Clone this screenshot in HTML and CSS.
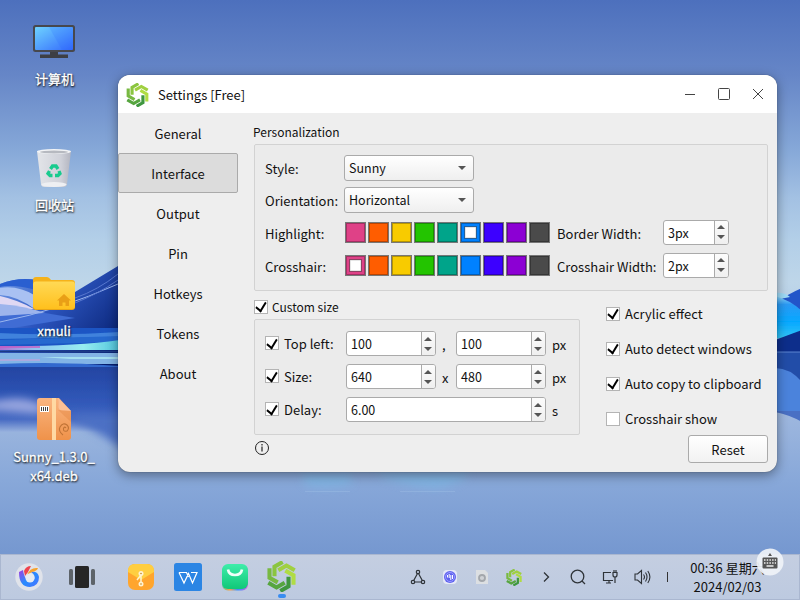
FILE: index.html
```html
<!DOCTYPE html>
<html lang="zh-CN">
<head>
<meta charset="utf-8">
<title>Settings</title>
<link rel="stylesheet" href="styles.css">
</head>
<body>
<svg width="0" height="0" class="defs">
  <symbol id="logo6" viewBox="-14.500 -15.500 29 31">
    <g fill="none" stroke-width="4.100">
      <path d="M-12-8.300V1.200L-3.800 5.900" stroke="#78b942"/>
      <path d="M-12-8.300V1.200L-3.800 5.900" stroke="#8bc540" transform="rotate(60)"/>
      <path d="M-12-8.300V1.200L-3.800 5.900" stroke="#a0d040" transform="rotate(120)"/>
      <path d="M-12-8.300V1.200L-3.800 5.900" stroke="#b0dc43" transform="rotate(180)"/>
      <path d="M-12-8.300V1.200L-3.800 5.900" stroke="#3f973f" transform="rotate(240)"/>
      <path d="M-12-8.300V1.200L-3.800 5.900" stroke="#56a53f" transform="rotate(300)"/>
    </g>
  </symbol>
</svg>
<div class="desktop">
  <svg class="wallpaper" viewBox="0 0 800 600" width="800" height="600" preserveAspectRatio="none">
    <defs>
      <linearGradient id="sky" x1="0" y1="0" x2="0" y2="1"><stop offset="0" stop-color="#4d70bd"/><stop offset=".125" stop-color="#6686c7"/><stop offset=".25" stop-color="#86a8d8"/><stop offset=".33" stop-color="#a3c1e3"/><stop offset=".4" stop-color="#b3cfe8"/><stop offset=".47" stop-color="#bed6e9"/><stop offset=".7" stop-color="#9cb6de"/><stop offset=".8" stop-color="#88a8d9"/><stop offset=".92" stop-color="#7698d0"/><stop offset="1" stop-color="#7698d0"/></linearGradient>
      <linearGradient id="hill" x1="0" y1="0" x2="1" y2=".8"><stop offset="0" stop-color="#7ba4ec"/><stop offset=".45" stop-color="#2c55bf"/><stop offset="1" stop-color="#061f70"/></linearGradient>
      <linearGradient id="water" x1="0" y1="0" x2="0" y2="1"><stop offset="0" stop-color="#2344a2"/><stop offset=".55" stop-color="#3159b9"/><stop offset=".8" stop-color="#4468c2"/><stop offset="1" stop-color="#98b2de"/></linearGradient>
      <linearGradient id="streak" x1="0" y1="0" x2="1" y2="0"><stop offset="0" stop-color="#b06bd0"/><stop offset=".3" stop-color="#8fc4f0"/><stop offset=".7" stop-color="#96eef0"/><stop offset="1" stop-color="#4fc4dc"/></linearGradient>
      <linearGradient id="wave" x1="0" y1="0" x2="0" y2="1"><stop offset="0" stop-color="#8fd8fb"/><stop offset=".2" stop-color="#2b9af5"/><stop offset=".6" stop-color="#05a8ff"/><stop offset="1" stop-color="#35c6f6"/></linearGradient>
      <filter id="soft" x="-20%" y="-50%" width="140%" height="200%"><feGaussianBlur stdDeviation="4"/></filter>
      <filter id="haze" x="-20%" y="-50%" width="140%" height="200%"><feGaussianBlur stdDeviation=".6"/></filter>
    </defs>
    <rect width="800" height="600" fill="url(#sky)"/>
    <path d="M0 284Q18 277 38 280L75 292 118 266V370H0Z" fill="url(#hill)"/>
    <g filter="url(#haze)">
      <path d="M0 284Q18 277 36 280V290Q14 284 0 287Z" fill="#2c5fd0"/>
      <path d="M0 288Q18 285 36 296V310Q18 296 0 295Z" fill="#a9c1f2"/>
      <path d="M0 296Q18 300 34 309L0 309Z" fill="#e0d8f3"/>
      <path d="M0 304Q25 306 45 313L0 322Z" fill="#9db4ec"/>
      <path d="M0 316 45 313 75 318 0 330Z" fill="#3f6cd4"/>
      <path d="M0 322Q60 310 118 284" fill="none" stroke="#9bb6ef"/>
      <path d="M75 298Q98 290 118 274M75 303Q98 294 118 280" fill="none" stroke="#5877cf"/>
      <path d="M-2 328H120V350H-2Z" fill="#1a55c4"/>
      <path d="M-2 333Q60 336 120 332V337L-2 339Z" fill="#3f82dc"/>
      <path d="M-2 340 120 336V342L-2 345Z" fill="#2669cf"/>
      <path d="M-2 346Q70 347 120 340V350H-2Z" fill="url(#streak)"/>
      <path d="M-2 353H120V364H-2Z" fill="#82b4e6"/>
      <path d="M40 357H120V359H70Z" fill="#a6e0f0"/>
      <path d="M-2 351.500H120" stroke="#1b3a86" stroke-width="1.500"/>
      <path d="M-2 347H40" stroke="#c65cc4" stroke-width="1.500"/>
      <path d="M-2 360H40" stroke="#b9a6dd" stroke-width="1.500"/>
      <path d="M-2 364Q60 361 120 366V370H-2Z" fill="#3269ce"/>
    </g>
    <path d="M-2 367H120V432H-2Z" fill="url(#water)" filter="url(#haze)"/>
    <path d="M-10 402Q20 395 36 402T36 414L-10 410Z" fill="#98a6df" filter="url(#soft)"/>
    <path d="M72 420Q100 432 130 454V415H72Z" fill="#4b70c4" filter="url(#soft)"/>
    <g filter="url(#haze)">
      <path d="M777 302Q788 294 802 288V318H777Z" fill="#2455c9"/>
      <path d="M775 293Q784 292 790 297L775 300Z" fill="#9fdcf8"/>
      <path d="M775 296Q790 300 802 311V330Q790 337 775 339Z" fill="url(#wave)"/>
      <path d="M775 340 802 330V352H775Z" fill="#082d8b"/>
      <path d="M775 352H802V384H775Z" fill="#244da8"/>
      <path d="M775 368Q790 368 802 382V411H775Z" fill="#4c83dc"/>
      <path d="M775 411H802V422Q790 415 775 412Z" fill="#4a6fc4"/>
      <path d="M777 352H802" stroke="#5f86cf"/>
    </g>
    <path d="M302 474H350L352 484Q330 490 305 485ZM375 473H470Q460 485 435 488 395 485 375 473Z" fill="#7dbbe8" opacity=".6" filter="url(#soft)"/>
    <path d="M305 491.500H350M400 491.500H455" stroke="#a5c4e8" opacity=".35"/>
  </svg>

  <div class="shortcut computer">
    <svg width="44" height="44" viewBox="0 0 44 44">
      <defs><linearGradient id="scr" x1="0" y1="0" x2="1" y2="1"><stop offset="0" stop-color="#6ed2ff"/><stop offset="1" stop-color="#3369fc"/></linearGradient></defs>
      <path d="M18 29H26V32.500H36V36H8V32.500H18Z" fill="#3d3f45"/>
      <rect x="1" y="3" width="42" height="27" rx="2.500" fill="#47484d"/><rect x="3" y="5" width="38" height="23" rx="1" fill="url(#scr)"/><path d="M17 5H40Q41 5 41 6V28H30Z" fill="#245cff" opacity=".15"/>
    </svg>
    <span>计算机</span>
  </div>
  <div class="shortcut trash">
    <svg width="44" height="44" viewBox="0 0 44 44">
      <defs><linearGradient id="bin" x1="0" y1="0" x2="1" y2="0"><stop offset="0" stop-color="#e3e5e9"/><stop offset=".7" stop-color="#cfd1d9"/><stop offset="1" stop-color="#b3b5c0"/></linearGradient></defs>
      <path d="M5 3 9 36Q9 39 13 39H31Q35 39 35 36L39 3Z" fill="url(#bin)"/><ellipse cx="22" cy="3.500" rx="17" ry="2.500" fill="#f3f4f6"/><ellipse cx="22" cy="4" rx="14" ry="1.500" fill="#b6b9c0"/><ellipse cx="22" cy="36.500" rx="12.500" ry="2.500" fill="#eeeff2"/>
      <g fill="none" stroke="#18cb8e" stroke-width="3.300"><path d="M18.500 21 20.500 18H24L26 21"/><path d="M27 23 28 25.500 26 27.500H23"/><path d="M20.500 27.500H18L16 25.500 17.500 23"/></g>
    </svg>
    <span>回收站</span>
  </div>
  <div class="shortcut home">
    <svg width="44" height="44" viewBox="0 0 44 44">
      <defs><linearGradient id="fold" x1="0" y1="0" x2="0" y2="1"><stop offset="0" stop-color="#ffd955"/><stop offset="1" stop-color="#ffc01d"/></linearGradient></defs>
      <path d="M1 6Q1 3 4 3H15Q17 3 19 6H40Q43 6 43 9V16H1Z" fill="#f5b21a"/><rect x="1" y="8" width="42" height="28" rx="3" fill="#e8a617"/><rect x="1" y="7.500" width="42" height="27.500" rx="3" fill="url(#fold)"/>
      <path d="M32 20 39 26.500H37V32H33.500V28.500H30.500V32H27V26.500H25Z" fill="#e99f16"/>
    </svg>
    <span>xmuli</span>
  </div>
  <div class="shortcut package">
    <svg width="44" height="44" viewBox="0 0 44 44">
      <defs><linearGradient id="deb" x1="0" y1="0" x2="0" y2="1"><stop offset="0" stop-color="#fab580"/><stop offset="1" stop-color="#ef924a"/></linearGradient></defs>
      <path d="M8 0H27L39 13V39Q39 42 36 42H8Q5 42 5 39V3Q5 0 8 0Z" fill="url(#deb)"/><path d="M20 0H24V42H20Z" fill="#ffd9a3"/><path d="M26 0Q27 3 26.500 8 26 12 30 12.500L39 13Z" fill="#fcc095"/><path d="M26 12 39 13V24Z" fill="#d97a35" opacity=".3"/>
      <path d="M8 8H17V14H8Z" fill="#fff"/><path d="M9.500 9V13M11.500 9V13M13.500 9V13M15.500 9V13" stroke="#444"/>
      <path d="M31 37Q26 33 28 29 31 24 35 27 38 30 35 33 31 34 31.500 30.500 32.500 28 34 30" fill="none" stroke="#c07335" stroke-width="1.100"/>
    </svg>
    <span>Sunny_1.3.0_<br>x64.deb</span>
  </div>

  <main class="window">
    <header class="titlebar">
      <svg class="logo" width="23" height="24"><use href="#logo6"/></svg>
      <h1>Settings [Free]</h1>
      <svg class="controls" width="82" height="16" viewBox="0 0 82 16" fill="none" stroke="#444"><path d="M1 8.500H11"/><rect x="34.500" y="2.500" width="11" height="11" rx="1"/><path d="M69 3 79 13M79 3 69 13"/></svg>
    </header>
    <div class="body">
      <nav class="sidebar">
        <a>General</a><a class="active">Interface</a><a>Output</a><a>Pin</a><a>Hotkeys</a><a>Tokens</a><a>About</a>
      </nav>
      <section class="content">
        <h2>Personalization</h2>
        <div class="group personal">
          <div class="row select-row"><label>Style:</label><div class="combo">Sunny<i></i></div></div>
          <div class="row select-row"><label>Orientation:</label><div class="combo">Horizontal<i></i></div></div>
          <div class="row color-row"><label>Highlight:</label>
            <div class="swatches"><b class="pink"></b><b class="orange"></b><b class="yellow"></b><b class="green"></b><b class="teal"></b><b class="blue picked"></b><b class="indigo"></b><b class="purple"></b><b class="gray"></b></div>
            <label>Border Width:</label><div class="spin short"><span>3px</span><i></i></div></div>
          <div class="row color-row"><label>Crosshair:</label>
            <div class="swatches"><b class="pink picked"></b><b class="orange"></b><b class="yellow"></b><b class="green"></b><b class="teal"></b><b class="blue"></b><b class="indigo"></b><b class="purple"></b><b class="gray"></b></div>
            <label>Crosshair Width:</label><div class="spin short"><span>2px</span><i></i></div></div>
        </div>
        <div class="lower">
          <div class="left">
            <div class="check custom"><i class="on"></i><span>Custom size</span></div>
            <div class="group size">
              <div class="size-row"><div class="check"><i class="on"></i><span>Top left:</span></div><div class="spin"><span>100</span><i></i></div><em>,</em><div class="spin"><span>100</span><i></i></div><em>px</em></div>
              <div class="size-row"><div class="check"><i class="on"></i><span>Size:</span></div><div class="spin"><span>640</span><i></i></div><em>x</em><div class="spin"><span>480</span><i></i></div><em>px</em></div>
              <div class="size-row"><div class="check"><i class="on"></i><span>Delay:</span></div><div class="spin wide"><span>6.00</span><i></i></div><em>s</em></div>
            </div>
            <svg class="info" width="16" height="16" viewBox="0 0 16 16" fill="none" stroke="#222"><circle cx="8" cy="8" r="6.500"/><path d="M8 6.500V11.500M8 4V5.500" stroke-width="1.200"/></svg>
          </div>
          <div class="right">
            <div class="check"><i class="on"></i><span>Acrylic effect</span></div>
            <div class="check"><i class="on"></i><span>Auto detect windows</span></div>
            <div class="check"><i class="on"></i><span>Auto copy to clipboard</span></div>
            <div class="check"><i></i><span>Crosshair show</span></div>
            <button>Reset</button>
          </div>
        </div>
      </section>
    </div>
  </main>

  <footer class="taskbar">
    <div class="apps">
      <svg width="28" height="28" viewBox="0 0 28 28"><defs><linearGradient id="ring" x1="0" y1="0" x2="1" y2="1"><stop offset="0" stop-color="#a13ce2"/><stop offset=".5" stop-color="#288cff"/><stop offset="1" stop-color="#4a72ff"/></linearGradient></defs><circle cx="14" cy="14" r="13.700" fill="#e0e3ea"/><path d="M4 9Q4 24 15 24 24 23 24 14 23 8 16 9 21 12 19 17 16 20 12 17 9 14 8 7Z" fill="url(#ring)"/><path d="M9 8Q11 3 16 3L13 9 10 13Z" fill="#ef424d"/><path d="M12 12Q15 4 23 5 22 8 17 9Z" fill="#f7a22d"/><circle cx="15" cy="15" r="4.500" fill="#e6eaf2"/></svg>
      <svg width="28" height="28" viewBox="0 0 28 28"><rect x="1" y="6" width="4" height="16" rx="1.500" fill="#5d6369"/><rect x="7" y="3" width="14" height="22" rx="1.500" fill="#262626"/><rect x="23" y="6" width="4" height="16" rx="1.500" fill="#5d6369"/></svg>
      <svg width="28" height="28" viewBox="0 0 28 28"><rect x="1" y="1" width="26" height="26" rx="7" fill="#ffa52d"/><path d="M1 8Q1 1 8 1H20Q27 1 27 8V9L14 17 1 9Z" fill="#ffce40"/><path d="M14 10V20M14 12 10 17" stroke="#fff4cc" stroke-width="1.500"/><circle cx="14" cy="10.500" r="2.500" fill="#fff2d1"/><circle cx="14" cy="21" r="2.500" fill="#fff2d1"/><circle cx="14" cy="10.500" r=".8" fill="#bd8523"/><circle cx="14" cy="21" r=".8" fill="#bd8523"/></svg>
      <svg width="28" height="28" viewBox="0 0 28 28"><rect width="28" height="28" rx="2.500" fill="#2b85e4"/><path d="M5 9.500H12.500L14.500 14M5 9.500 10 20 14.500 10.500 18.500 20 23 9.500H17" fill="none" stroke="#fff" stroke-width="1.200"/></svg>
      <svg width="28" height="28" viewBox="0 0 28 28"><defs><linearGradient id="store" x1="0" y1="0" x2="0" y2="1"><stop offset="0" stop-color="#3eedaa"/><stop offset="1" stop-color="#10c878"/></linearGradient><linearGradient id="rain"><stop offset="0" stop-color="#52c6a0"/><stop offset=".3" stop-color="#ffa042"/><stop offset=".6" stop-color="#3693ff"/><stop offset="1" stop-color="#d45be5"/></linearGradient></defs><rect x="1" y="2" width="26" height="25.500" rx="6" fill="url(#rain)"/><rect x="1" y="1" width="26" height="25" rx="6" fill="url(#store)"/><path d="M7 6.500Q8 12 14 12T21 6.500" fill="none" stroke="#f1fff9" stroke-width="2.700"/></svg>
      <div class="running"><svg width="29" height="31"><use href="#logo6"/></svg><i></i></div>
    </div>
    <div class="tray">
      <svg width="16" height="16" viewBox="0 0 16 16" fill="none" stroke="#2e3338" stroke-width="1.200"><circle cx="8" cy="3" r="1.700"/><circle cx="3" cy="13" r="1.700"/><circle cx="13" cy="13" r="1.700"/><path d="M7.500 4.500 3.700 11.500M8.500 4.500 12.300 11.500M4.500 13H11.500"/></svg>
      <svg width="16" height="16" viewBox="0 0 16 16"><rect x="1" y="1" width="14" height="14" rx="4" fill="#e5e8f7"/><circle cx="8" cy="8" r="6" fill="#5e62ef"/><circle cx="8" cy="8" r="4.500" fill="none" stroke="#a8a6ff" stroke-width=".8"/><path d="M5.500 6V8.500M7.200 5V9M8.800 6V11M10.500 6V10" stroke="#fff"/></svg>
      <svg width="16" height="16" viewBox="0 0 16 16"><path d="M2 1H11L14 4V15H2Z" fill="#dcdfe2"/><circle cx="8" cy="9" r="3" fill="#cfd2d6" stroke="#a3a7ac" stroke-width="1.800"/></svg>
      <svg width="16" height="17"><use href="#logo6"/></svg>
      <svg width="16" height="16" viewBox="0 0 16 16" fill="none" stroke="#2e3338" stroke-width="1.300"><path d="M6 3.500 10.500 8 6 12.500"/></svg>
      <svg width="16" height="16" viewBox="0 0 16 16" fill="none" stroke="#2e3338" stroke-width="1.300"><circle cx="7.500" cy="7.500" r="6.300"/><path d="M12 12 15 15"/></svg>
      <svg width="16" height="16" viewBox="0 0 16 16" fill="none" stroke="#2e3338" stroke-width="1.200"><path d="M9 3.500H1.500V11.500H11M7 11.500V14M4 14H9M11 3.500H15V6Q15 8 13 8T11 6ZM12 3.500V1M14 3.500V1M13 8V14"/></svg>
      <svg width="18" height="16" viewBox="0 0 18 16" fill="none" stroke="#2e3338" stroke-width="1.100"><path d="M1 5H3.500L7.500 1.500V14.500L3.500 11H1ZM9.500 5.500Q11.500 8 9.500 10.500M11.500 3.500Q14.500 8 11.500 12.500M13.800 2Q18 8 13.800 14"/></svg>
      <s></s>
      <div class="clock"><span>00:36 星期六</span><span>2024/02/03</span></div>
    </div>
  </footer>
  <svg class="keyboard" width="28" height="28" viewBox="0 0 28 28"><circle cx="14" cy="14" r="13.500" fill="#eff2f7" opacity=".93"/><path d="M14 5 16 8H12Z" fill="#555"/><rect x="6.500" y="9.500" width="15" height="11" rx="1" fill="#555"/><path d="M8 12H20M8 15H20" stroke="#eee" stroke-width="1.700" stroke-dasharray="1.500 1.200"/><path d="M10.500 18H17.500" stroke="#eee" stroke-width="1.500"/></svg>
</div>
</body>
</html>
```
FILE: styles.css
```css
* { box-sizing: border-box; }
body { margin: 0; font: 13px/20px "Noto Sans CJK SC", sans-serif; color: #111; }
.defs { position: absolute; }
.desktop { position: relative; width: 800px; height: 600px; overflow: hidden; }
.wallpaper { position: absolute; inset: 0; }
i, em { font-style: normal; }

.shortcut { position: absolute; left: 4px; width: 100px; display: flex; flex-direction: column; align-items: center; gap: 3px; color: #fff; font-size: 13px; line-height: 19px; text-align: center; text-shadow: 0 1px 2px #000c, 1px 1px 2px #000a; -webkit-text-stroke: .3px #fff; }
.computer { top: 22px; }
.trash { top: 148px; }
.computer span, .trash span { padding-left: 1px; }
.home { top: 274px; }
.package { top: 398px; gap: 5px; }

.window { position: absolute; left: 118px; top: 75px; width: 659px; height: 397px; border-radius: 12px; background: #eee; box-shadow: 0 0 1px #0008, 0 3px 12px #0006; overflow: hidden; }
.titlebar { height: 38px; display: flex; align-items: center; background: #fff; padding: 2px 11px 0 8px; }
.titlebar h1 { font-size: 13px; font-weight: 400; margin: 0 0 0 9px; }
.controls { margin: -3px 0 0 auto; }
.body { display: flex; }
.sidebar { width: 120px; display: flex; flex-direction: column; }
.sidebar a { height: 40px; display: flex; align-items: center; justify-content: center; border: 1px solid transparent; border-radius: 2px; padding-top: 2px; }
.sidebar .active { background: #dcdcdc; border-color: #aaa; }

.content { padding: 9px 9px 0 16px; flex: 1; }
.content h2 { font-size: 12px; font-weight: 400; line-height: 20px; margin: 0 0 2px -1px; }
.group { background: #ebebeb; border: 1px solid #d2d2d2; border-radius: 2px; }
.personal { height: 147px; padding: 10px 10px 0; }
.row { display: grid; align-items: center; }
.select-row { grid-template-columns: 79px 130px; height: 26px; margin-bottom: 6px; }
.row label { padding-top: 2px; white-space: nowrap; }
.combo { height: 26px; border: 1px solid #aaa; border-radius: 3px; background: linear-gradient(#fff, #efefef); padding: 0 7px 0 4px; display: flex; align-items: center; justify-content: space-between; font-size: 12.5px; }
.combo i { border: 4px solid transparent; border-top: 4px solid #555; border-bottom: 0; }
.color-row { grid-template-columns: 80px 212px 106px 66px; height: 26px; margin-bottom: 7px; }
.color-row label { padding-top: 4px; }
.swatches { display: flex; gap: 2px; }
.swatches b { width: 21px; height: 21px; border: 1px solid #777; box-shadow: inset 0 0 0 1px #0004; display: grid; place-items: center; }
.picked::after { content: ""; width: 11px; height: 11px; border: 1px solid #4448; background: #fff; background-clip: padding-box; box-shadow: inset 0 0 0 .5px #0003; }
.pink { background: #df4187; } .orange { background: #ff5d00; } .yellow { background: #f8cb00; }
.green { background: #23c400; } .teal { background: #00a48a; } .blue { background: #0081ff; }
.indigo { background: #3c00ff; } .purple { background: #8c00d4; } .gray { background: #4a4a4a; }

.spin { height: 25px; display: grid; grid-template-columns: 1fr 14px; border: 1px solid #aaa; border-radius: 3px; background: #fff; line-height: 24px; font-size: 12.5px; overflow: hidden; }
.spin span { padding-left: 4px; height: 23px; }
.spin i { height: 23px; border-left: 1px solid #aaa; background: linear-gradient(#fcfcfc, #efefef); display: flex; flex-direction: column; align-items: center; justify-content: center; gap: 6px; padding: 0 1px 0 0; }
.spin i::before, .spin i::after { content: ""; border: 4px solid transparent; }
.spin i::before { border-top: 0; border-bottom: 4px solid #555; }
.spin i::after { border-bottom: 0; border-top: 4px solid #555; }

.lower { display: grid; grid-template-columns: 326px 162px; gap: 26px; }
.check { display: flex; align-items: center; gap: 5px; height: 20px; white-space: nowrap; }
.check > i { width: 14px; height: 14px; border: 1px solid #b4b4b4; background: #fff; display: grid; place-items: center; flex: none; margin-top: -1px; }
.check .on::after { content: ""; width: 5px; height: 9px; border: solid #000; border-width: 0 2px 2px 0; transform: translate(-.5px, -1px) rotate(32deg) skewY(8deg); }
.custom { margin-top: 6px; font-size: 12px; gap: 4px; }
.size { height: 116px; margin-top: 2px; padding: 11px 0 0 10px; }
.size-row { display: flex; align-items: center; height: 25px; margin-bottom: 8px; }
.size-row .check { width: 81px; }
.size-row .spin { width: 90px; }
.size-row .wide { width: 200px; }
.size-row em { width: 20px; padding: 2px 0 0 6px; }
.info { display: block; margin-top: 5px; }
.right { padding-top: 13px; }
.right .check { margin-bottom: 15px; }
.right button { display: block; margin: -9px 0 0 auto; width: 80px; height: 28px; border: 1px solid #aaa; border-radius: 3px; background: linear-gradient(#fff, #f2f2f2); font: inherit; color: inherit; padding: 2px 0 0; }

.taskbar { position: absolute; left: 0; right: 0; top: 554px; height: 46px; display: flex; justify-content: space-between; background: linear-gradient(#c4cee1, #bdcae0); border: 1px solid #aab7d0; }
.apps { display: flex; align-items: center; padding-left: 14px; }
.apps > :nth-child(1) { margin-right: 25px; }
.apps > :nth-child(2) { margin-right: 31px; }
.apps > :nth-child(n+3) { margin-right: 19px; }
.apps > .running { display: flex; flex-direction: column; align-items: center; height: 43px; padding-top: 5px; margin-left: -1px; }
.running svg, .running i { flex: none; }
.running i { width: 8px; height: 4px; border-radius: 2px; background: #388cf0; margin-top: 2px; }
.tray { display: flex; align-items: center; gap: 16px; padding-right: 31px; }
.tray s { width: 1px; height: 10px; background: #333; margin-left: -1px; }
.clock { width: 84px; display: flex; flex-direction: column; align-items: center; font-size: 13px; line-height: 19px; white-space: nowrap; padding: 0 0 1px 3px; }
.keyboard { position: absolute; left: 756px; top: 548px; }
```
